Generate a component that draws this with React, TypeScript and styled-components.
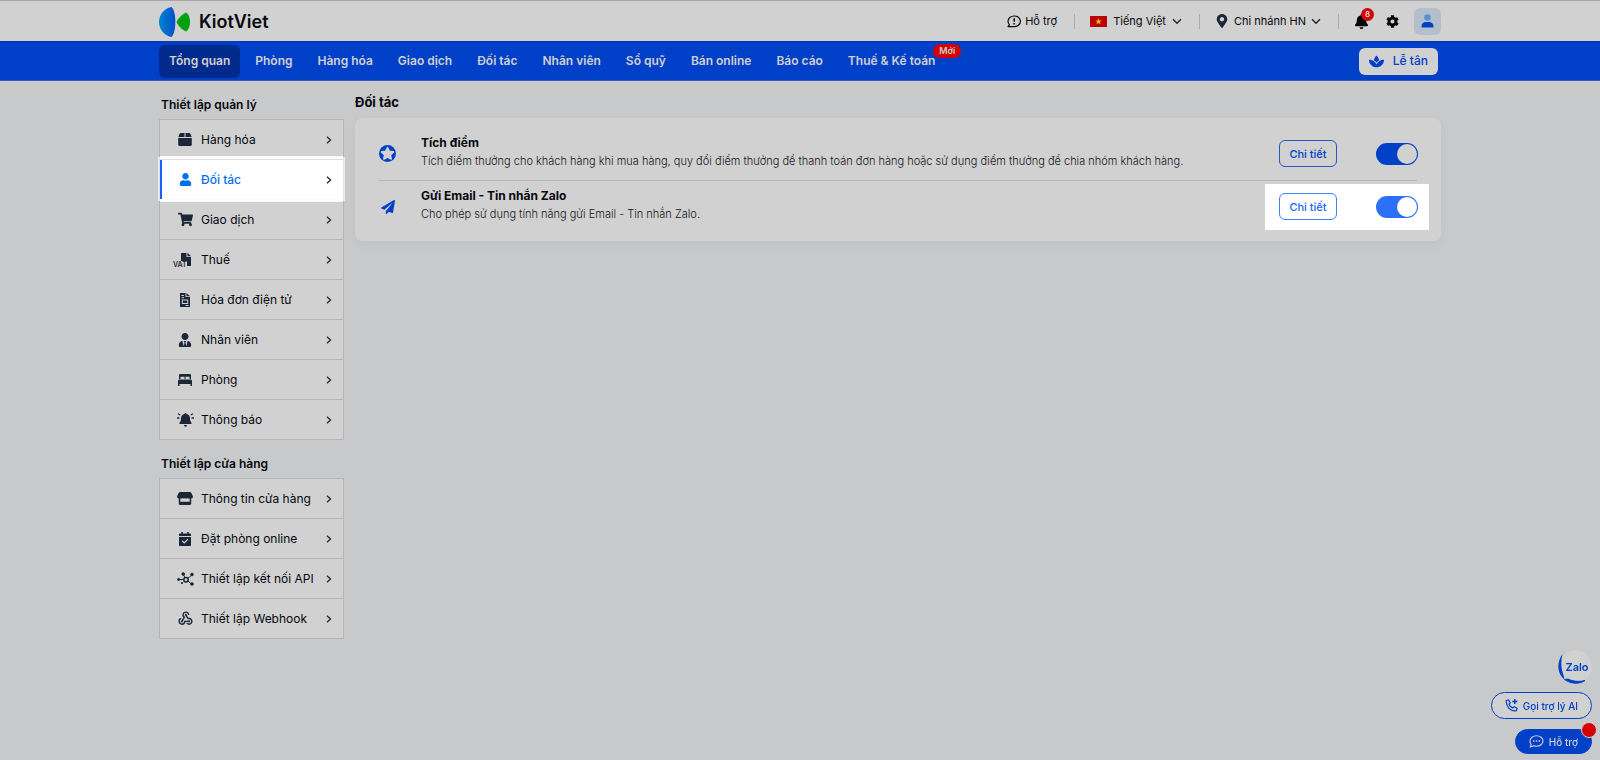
import React, { useState } from "react";
import styled, { createGlobalStyle } from "styled-components";
import { FaBell, FaCog, FaMapMarkerAlt, FaPaperPlane, FaShoppingCart, FaSpa, FaUser, FaUserTie } from "react-icons/fa";
import { MdWebhook } from "react-icons/md";

const color = {
  page: "#c8c9cb",
  surface: "#d1d1d1",
  line: "#b4b5b8",
  ink: "#05070c",
  icon: "#1b2636",
  brand: "#0040c8",
  brandDark: "#002b8c",
  bright: "#0070f4",
  red: "#d40000",
};

const GlobalStyle = createGlobalStyle`
  *, *::before, *::after { box-sizing: border-box; }
  body {
    margin: 0;
    min-height: 100vh;
    background: ${color.page};
    color: ${color.ink};
    font-family: Inter, "Noto Sans", sans-serif;
    font-size: 12px;
    line-height: 16px;
  }
  button, input, select { font: inherit; color: inherit; }
  button { cursor: pointer; }
  a { color: inherit; text-decoration: none; }
  h1, h2, h3, p, ul { margin: 0; padding: 0; }
  ul { list-style: none; }
  svg { display: block; flex: none; }
`;

const Container = styled.div`
  max-width: 1282px;
  margin: 0 auto;
  display: flex;
`;

const Header = styled.header`
  background: ${color.surface};
  border-top: 1px solid #a6a6a6;
  ${Container} { height: 40px; align-items: center; justify-content: space-between; }
`;

const Logo = styled.a`
  display: flex;
  align-items: center;
  gap: 8px;
  padding-top: 2px;
  font-size: 18px;
  line-height: 24px;
  font-weight: 600;
`;

const Tools = styled.div`
  display: flex;
  align-items: center;
  font-size: 11px;
`;

const PlainButton = styled.button<{ $gap?: number }>`
  display: flex;
  align-items: center;
  gap: ${(p) => p.$gap ?? 4}px;
  padding: 0;
  border: 0;
  background: none;
`;

const Divider = styled.span`
  width: 1px;
  height: 15px;
  margin: 0 15px 0 17px;
  background: #aaabad;
`;

const BellButton = styled(PlainButton)`
  position: relative;
  margin-right: 17px;
`;

const Count = styled.span`
  position: absolute;
  top: -6px;
  right: -5px;
  width: 13px;
  height: 13px;
  border-radius: 50%;
  background: ${color.red};
  color: #dcdcdc;
  font-size: 8px;
  line-height: 13px;
  font-weight: 600;
`;

const Avatar = styled.button`
  display: grid;
  place-items: center;
  width: 27px;
  height: 27px;
  margin-left: 15px;
  padding: 0;
  border: 0;
  border-radius: 6px;
  background: #b3bfcc;
`;

const NavBar = styled.nav`
  background: ${color.brand};
  border-top: 1px solid #0036b4;
  border-bottom: 1px solid #3c58b4;
  ${Container} { height: 38px; align-items: center; justify-content: space-between; }
`;

const NavList = styled.ul`
  display: flex;
  gap: 5px;
`;

const NavLink = styled.a<{ $active?: boolean }>`
  position: relative;
  display: flex;
  align-items: center;
  height: 33px;
  padding: 0 10px;
  border-radius: 6px;
  background: ${(p) => (p.$active ? color.brandDark : "transparent")};
  color: #d1d1d1;
  font-weight: 600;
`;

const NewTag = styled.span`
  position: absolute;
  top: -1px;
  right: -16px;
  padding: 0 6px;
  border-radius: 7px;
  background: ${color.red};
  font-size: 9px;
  line-height: 14px;
`;

const Reception = styled.button`
  display: flex;
  align-items: center;
  gap: 9px;
  height: 27px;
  margin-right: 3px;
  padding: 0 10px;
  border: 0;
  border-radius: 6px;
  background: ${color.surface};
  color: ${color.brand};
  font-weight: 500;
`;

const Page = styled(Container)`
  align-items: flex-start;
  gap: 11px;
  padding-top: 12px;
`;

const Sidebar = styled.aside`
  flex: 0 0 185px;
  display: flex;
  flex-direction: column;
  gap: 12px;
`;

const GroupTitle = styled.h2`
  padding: 4px 2px 6px;
  font-size: 12px;
  line-height: 16px;
  font-weight: 600;
`;

const Menu = styled.ul`
  border: 1px solid ${color.line};
`;

const MenuItem = styled.li<{ $active?: boolean }>`
  position: relative;
  z-index: ${(p) => (p.$active ? 1 : 0)};
  background: ${(p) => (p.$active ? "#ffffff" : color.surface)};
  box-shadow: ${(p) => (p.$active ? "0 3px #ffffffd8, 0 -3px #ffffffd8, 0 0 0 2px #ffffffa0" : "none")};
  &:not(:first-child) { border-top: 1px solid ${(p) => (p.$active ? "#dcdee0" : color.line)}; }
`;

const MenuLink = styled.a<{ $active?: boolean }>`
  display: grid;
  grid-template-columns: 24px 1fr 6px;
  align-items: center;
  gap: 4px;
  height: 39px;
  padding: 0 11px 0 11px;
  border-left: 2px solid ${(p) => (p.$active ? "#1a5fff" : "transparent")};
  color: ${(p) => (p.$active ? color.bright : color.ink)};
  font-weight: ${(p) => (p.$active ? 500 : 400)};
  white-space: nowrap;
`;

const MenuIcon = styled.span<{ $active?: boolean }>`
  display: grid;
  place-items: center;
  color: ${(p) => (p.$active ? color.bright : color.icon)};
`;

const Main = styled.main`
  flex: 1;
  min-width: 0;
`;

const Title = styled.h1`
  padding-bottom: 7px;
  font-size: 13px;
  line-height: 18px;
  font-weight: 700;
`;

const Card = styled.section`
  padding: 9px 24px 8px;
  border-radius: 8px;
  background: ${color.surface};
  box-shadow: 0 4px 12px #0000000a;
`;

const Setting = styled.div`
  display: flex;
  align-items: center;
  height: 53px;
  &:not(:first-child) { box-shadow: inset 0 1px ${color.line}; }
`;

const SettingIcon = styled.span`
  display: grid;
  place-items: center;
  flex: 0 0 17px;
  margin-right: 25px;
  color: ${color.brand};
`;

const SettingText = styled.div`
  flex: 1;
  min-width: 0;
  padding-bottom: 4px;
  h3 { font-size: 12px; line-height: 18px; font-weight: 700; }
  p { font-size: 11px; line-height: 18px; font-weight: 300; color: #14171d; }
`;

const Actions = styled.div<{ $lit?: boolean }>`
  display: flex;
  align-items: center;
  gap: 39px;
  height: 46px;
  margin-right: -12px;
  padding: 0 11px 0 14px;
  background: ${(p) => (p.$lit ? "#ffffff" : "transparent")};
`;

const Detail = styled.button<{ $lit?: boolean }>`
  width: 58px;
  height: 27px;
  padding: 0;
  border: 1px solid ${(p) => (p.$lit ? "#3b82fb" : "#2458c4")};
  border-radius: 6px;
  background: none;
  color: ${(p) => (p.$lit ? "#1a66f0" : color.brand)};
  font-size: 11px;
  font-weight: 500;
`;

const Switch = styled.input<{ $lit?: boolean }>`
  appearance: none;
  display: flex;
  align-items: center;
  width: 42px;
  height: 22px;
  margin: 0;
  padding: 0 1px;
  border-radius: 11px;
  background: #8d9096;
  cursor: pointer;
  &::before {
    content: "";
    width: 20px;
    height: 20px;
    border-radius: 50%;
    background: ${(p) => (p.$lit ? "#ffffff" : color.surface)};
  }
  &:checked {
    justify-content: flex-end;
    background: ${(p) => (p.$lit ? "#2d70f8" : color.brand)};
  }
`;

const Floating = styled.div`
  position: fixed;
  right: 8px;
  bottom: 6px;
  display: flex;
  flex-direction: column;
  align-items: flex-end;
`;

const Zalo = styled.button`
  position: relative;
  display: grid;
  place-items: center;
  width: 34px;
  height: 34px;
  margin-bottom: 8px;
  padding: 0 0 0 4px;
  border: 0;
  background: none;
  color: ${color.brand};
  font-size: 11px;
  font-weight: 600;
  svg { position: absolute; inset: 0; }
  span { position: relative; }
`;

const Pill = styled.button<{ $solid?: boolean }>`
  position: relative;
  display: flex;
  align-items: center;
  gap: 5px;
  height: ${(p) => (p.$solid ? 25 : 27)}px;
  margin-bottom: ${(p) => (p.$solid ? 0 : 10)}px;
  padding: 0 13px;
  border: 1px solid ${color.brand};
  border-radius: 14px;
  background: ${(p) => (p.$solid ? color.brand : color.surface)};
  color: ${(p) => (p.$solid ? "#d1d1d1" : color.brand)};
  font-size: 10px;
  font-weight: 500;
`;

const Dot = styled.i`
  position: absolute;
  top: -8px;
  right: -6px;
  width: 16px;
  height: 16px;
  border: 1px solid #d1d1d1;
  border-radius: 50%;
  background: ${color.red};
`;

const Svg = ({ w = 16, h = w, box, children }: { w?: number; h?: number; box: string; children: React.ReactNode }) => (
  <svg width={w} height={h} viewBox={box} fill="currentColor" aria-hidden="true">{children}</svg>
);

const Arrow = () => (
  <svg width="6" height="8" viewBox="0 0 6 8" fill="none" stroke="#22262c" strokeWidth="1.300" aria-hidden="true">
    <path d="M1 .7L4.600 4 1 7.300" />
  </svg>
);

const Caret = () => (
  <svg width="10" height="7" viewBox="0 0 10 7" fill="none" stroke="#22262c" strokeWidth="1.400" aria-hidden="true">
    <path d="M1 1.300l4 4 4-4" />
  </svg>
);

const LogoMark = () => (
  <svg width="32" height="32" viewBox="0 0 32 32" aria-hidden="true">
    <defs>
      <linearGradient id="mark" x1="0" y1="0" x2="1" y2="0">
        <stop offset="0" stopColor="#0086d2" />
        <stop offset="1" stopColor="#004fcb" />
      </linearGradient>
    </defs>
    <path d="M12.5 1C4.500 2.800 0 9 0 16s4.500 13.200 12.500 15c2.800-3 3.800-8.500 3.800-15S15.300 4 12.500 1z" fill="url(#mark)" />
    <path d="M27.200 6.500c-4 1.800-7.400 5-9.400 8.800-.2.500-.2.900 0 1.400 2 3.800 5.400 7 9.400 8.800 2.600-2 3.800-5.500 3.800-9.500s-1.200-7.500-3.800-9.500z" fill="#00a011" />
  </svg>
);

const HelpBubble = () => (
  <svg width="14" height="13" viewBox="0 0 14 13" fill="none" stroke="currentColor" strokeWidth="1.200" aria-hidden="true">
    <path d="M1 11.600h6.200c3.500 0 6.200-2.400 6.200-5.300S10.700 1 7.200 1 1 3.400 1 6.300c0 1.300.5 2.500 1.500 3.400z" strokeLinejoin="round" />
    <path d="M7.200 3.300v3.500M7.200 8v1.400" strokeWidth="1.500" />
  </svg>
);

const Flag = () => (
  <svg width="17" height="11" viewBox="0 0 17 11" aria-hidden="true">
    <path fill="#bd0008" d="M0 0h17v11H0z" />
    <path fill="#dccb00" d="M8.500 2.200l.8 2.400h2.500l-2 1.500.8 2.400-2.100-1.500-2.100 1.500.8-2.400-2-1.500h2.500z" />
  </svg>
);

const Person = () => (
  <svg width="13" height="14" viewBox="0 0 13 14" aria-hidden="true">
    <circle cx="6.500" cy="3.500" r="3.300" fill="#5a8fd4" />
    <path d="M.5 12.500c0-3 1.800-4.500 4.500-4.500h3c2.700 0 4.500 1.500 4.500 4.500 0 .7-.4 1-1 1h-10c-.6 0-1-.3-1-1z" fill="#0043c4" />
  </svg>
);

const BoxIcon = () => (
  <Svg w={14} h={13} box="0 0 14 13">
    <path d="M2.800 0h3.700v4H.3l1.300-3.300C1.800.2 2.200 0 2.800 0zM7.500 0h3.700c.6 0 1 .2 1.200.7L13.700 4H7.500zM.2 5h13.600v6.800c0 .7-.5 1.200-1.200 1.200H1.400c-.7 0-1.200-.5-1.200-1.200z" />
  </Svg>
);

const VatIcon = () => (
  <svg width="24" height="16" viewBox="0 0 24 16" fill="currentColor" aria-hidden="true">
    <path d="M8 1h5.500v4H18v9h-4V9H8z" />
    <path d="M14.500.8L18 4.200h-3.500z" />
    <text x="0" y="15" fontSize="7" fontWeight="600">VAT</text>
  </svg>
);

const InvoiceIcon = () => (
  <Svg w={12} h={14} box="0 0 12 14">
    <path fillRule="evenodd" d="M1 0h5.500v4H11v10H1zM2.500 2v1H5V2zM2.500 4.200v1H5v-1zM2.800 6.500V11h6.400V6.500zM3.800 7.500h4.400V10H3.800zM6.500 12v1h3v-1z" />
    <path d="M7.500 0L11 3.200H7.500z" />
  </Svg>
);

const BedIcon = () => (
  <Svg w={14} h={12} box="0 0 14 12">
    <path fillRule="evenodd" d="M1 5V1.200C1 .5 1.500 0 2.200 0h9.600c.7 0 1.200.5 1.200 1.200V5h-1.500V2.800h-4V5h-1V2.800h-4V5zM1.500 5.500h11c.8 0 1.500.7 1.500 1.500v5h-1.500v-2h-11v2H0V7c0-.8.7-1.500 1.500-1.500z" />
  </Svg>
);

const AlarmIcon = () => (
  <Svg w={17} h={14} box="0 0 17 14">
    <path d="M8.500 0c.6 0 1 .4 1 1 2.200.4 3.500 2.200 3.500 4.200 0 2.500.6 3.500 1.500 4.600.4.500.1 1.200-.6 1.200H3.100c-.7 0-1-.7-.6-1.200C3.400 8.700 4 7.700 4 5.200 4 3.200 5.300 1.400 7.500 1c0-.6.4-1 1-1zM7 12h3c0 1-.6 1.700-1.500 1.700S7 13 7 12z" />
    <path d="M1 .8l2.200 1.200M0 5h2.400M16 .8L13.800 2M17 5h-2.400" stroke="currentColor" strokeWidth="1.300" />
  </Svg>
);

const StoreIcon = () => (
  <Svg w={16} h={13} box="0 0 16 13">
    <path fillRule="evenodd" d="M3 0h10c.5 0 .9.200 1.100.6L15.800 4c.5 1.300-.3 2.500-1.600 2.500v5.300c0 .7-.5 1.200-1.200 1.200H3c-.7 0-1.200-.5-1.200-1.200V6.500C.5 6.500-.3 5.300.2 4L1.900.6C2.100.2 2.500 0 3 0zm.3 6.300v3.500h9.400V6.300c-.6.400-1.800.4-2.400-.3-.6.700-1.700.7-2.300 0-.6.700-1.700.7-2.300 0-.6.700-1.800.7-2.400.3z" />
  </Svg>
);

const CalendarIcon = () => (
  <Svg w={12} h={14} box="0 0 12 14">
    <path fillRule="evenodd" d="M2.300 0h1.500v1.500h4.400V0h1.500v1.500H11c.6 0 1 .4 1 1V4H0V2.500c0-.6.400-1 1-1h1.300zM0 5h12v8c0 .6-.4 1-1 1H1c-.6 0-1-.4-1-1zm8.500 1.700L5.300 10 3.600 8.400l-.9.900 2.600 2.500L9.400 7.600z" />
  </Svg>
);

const ApiIcon = () => (
  <svg width="17" height="14" viewBox="0 0 17 14" fill="currentColor" stroke="currentColor" aria-hidden="true">
    <path d="M1.500 7.500H6M6.500 2.500L8 6M10.500 6.500L15 3M10.500 8.500l4 3.500" fill="none" />
    <circle cx="9" cy="7.700" r="2.200" fill="none" strokeWidth="1.500" />
    <circle cx="1.600" cy="7.500" r="1.100" />
    <circle cx="6.200" cy="2" r="1.300" />
    <circle cx="15" cy="2.500" r="1.300" />
    <circle cx="5" cy="11" r=".7" />
    <circle cx="15" cy="12" r="1.300" />
  </svg>
);

const StarBadge = () => (
  <Svg w={17} box="0 0 17 17">
    <circle cx="8.500" cy="8.500" r="8.500" />
    <path fill="#d1d1d1" stroke="#d1d1d1" strokeWidth="1.800" strokeLinejoin="round" d="M8.500 2.800l1.700 3.700 4.100.5-3 2.800.8 4.100-3.600-2-3.600 2 .8-4.100-3-2.800 4.100-.5z" />
  </Svg>
);

const ZaloMark = () => (
  <svg width="34" height="34" viewBox="0 0 34 34" aria-hidden="true">
    <circle cx="17.500" cy="16.500" r="16.300" fill={color.surface} />
    <path d="M4.500 4C-1 12-1 21 4 27l2.500 2.500L5.800 26C3 19 2.500 12 4.500 4z" fill={color.brand} />
    <path d="M6.500 29.500c6 4.500 15 5 20.500 1C21 32 15 31.500 10 29z" fill={color.brand} stroke={color.brand} />
  </svg>
);

const CallIcon = () => (
  <svg width="13" height="13" viewBox="0 0 13 13" fill="none" stroke="currentColor" strokeWidth="1.200" strokeLinejoin="round" aria-hidden="true">
    <path d="M1.300 1.500L3.500.8l1.700 3-1.300 1.400c.7 1.600 2 2.900 3.800 3.700l1.500-1.200 2.900 1.600-.7 2.400C6 13 .5 7.500 1.300 1.500z" />
    <path d="M9.800 0v5M7.300 2.500h5" strokeWidth="1.500" />
  </svg>
);

const ChatIcon = () => (
  <svg width="15" height="13" viewBox="0 0 15 13" fill="none" stroke="currentColor" strokeWidth="1.100" aria-hidden="true">
    <path d="M1.200 12l1-2.500A4.500 4.500 0 0 1 1 6c0-3 3-5.200 6.500-5.200S14 3 14 6s-3 5.200-6.500 5.200c-1 0-2-.2-2.800-.5z" strokeLinejoin="round" />
    <path d="M4 6h1.400M6.800 6h1.400M9.600 6H11" strokeWidth="1.500" />
  </svg>
);

type Entry = { label: string; icon: React.ReactNode; active?: boolean };

const management: Entry[] = [
  { label: "Hàng hóa", icon: <BoxIcon /> },
  { label: "Đối tác", icon: <FaUser size={13} />, active: true },
  { label: "Giao dịch", icon: <FaShoppingCart size={15} /> },
  { label: "Thuế", icon: <VatIcon /> },
  { label: "Hóa đơn điện tử", icon: <InvoiceIcon /> },
  { label: "Nhân viên", icon: <FaUserTie size={14} /> },
  { label: "Phòng", icon: <BedIcon /> },
  { label: "Thông báo", icon: <AlarmIcon /> },
];

const store: Entry[] = [
  { label: "Thông tin cửa hàng", icon: <StoreIcon /> },
  { label: "Đặt phòng online", icon: <CalendarIcon /> },
  { label: "Thiết lập kết nối API", icon: <ApiIcon /> },
  { label: "Thiết lập Webhook", icon: <MdWebhook size={17} /> },
];

const navigation = ["Tổng quan", "Phòng", "Hàng hóa", "Giao dịch", "Đối tác", "Nhân viên", "Sổ quỹ", "Bán online", "Báo cáo", "Thuế & Kế toán"];

const MenuGroup = ({ title, items }: { title: string; items: Entry[] }) => (
  <section>
    <GroupTitle>{title}</GroupTitle>
    <Menu>
      {items.map((item) => (
        <MenuItem key={item.label} $active={item.active}>
          <MenuLink href="#" $active={item.active}>
            <MenuIcon $active={item.active}>{item.icon}</MenuIcon>
            {item.label}
            <Arrow />
          </MenuLink>
        </MenuItem>
      ))}
    </Menu>
  </section>
);

type SettingProps = { icon: React.ReactNode; title: string; text: string; lit?: boolean };

const SettingRow = ({ icon, title, text, lit }: SettingProps) => {
  const [on, setOn] = useState(true);
  return (
    <Setting>
      <SettingIcon>{icon}</SettingIcon>
      <SettingText>
        <h3>{title}</h3>
        <p>{text}</p>
      </SettingText>
      <Actions $lit={lit}>
        <Detail $lit={lit}>Chi tiết</Detail>
        <Switch type="checkbox" role="switch" aria-label={title} checked={on} onChange={() => setOn(!on)} $lit={lit} />
      </Actions>
    </Setting>
  );
};

export default function App() {
  return (
    <>
      <GlobalStyle />
      <Header>
        <Container>
          <Logo href="#"><LogoMark />KiotViet</Logo>
          <Tools>
            <PlainButton><HelpBubble />Hỗ trợ</PlainButton>
            <Divider />
            <PlainButton $gap={6}><Flag />Tiếng Việt<Caret /></PlainButton>
            <Divider />
            <PlainButton $gap={5}><FaMapMarkerAlt size={14} color={color.icon} />Chi nhánh HN<Caret /></PlainButton>
            <Divider />
            <BellButton aria-label="Thông báo"><FaBell size={15} /><Count>8</Count></BellButton>
            <PlainButton aria-label="Thiết lập"><FaCog size={13} /></PlainButton>
            <Avatar aria-label="Tài khoản"><Person /></Avatar>
          </Tools>
        </Container>
      </Header>
      <NavBar>
        <Container>
          <NavList>
            {navigation.map((label, i) => (
              <li key={label}>
                <NavLink href="#" $active={i === 0}>
                  {label}
                  {i === navigation.length - 1 && <NewTag>Mới</NewTag>}
                </NavLink>
              </li>
            ))}
          </NavList>
          <Reception><FaSpa size={15} />Lễ tân</Reception>
        </Container>
      </NavBar>
      <Page>
        <Sidebar>
          <MenuGroup title="Thiết lập quản lý" items={management} />
          <MenuGroup title="Thiết lập cửa hàng" items={store} />
        </Sidebar>
        <Main>
          <Title>Đối tác</Title>
          <Card>
            <SettingRow
              icon={<StarBadge />}
              title="Tích điểm"
              text="Tích điểm thưởng cho khách hàng khi mua hàng, quy đổi điểm thưởng để thanh toán đơn hàng hoặc sử dụng điểm thưởng để chia nhóm khách hàng."
            />
            <SettingRow
              icon={<FaPaperPlane size={14} />}
              title="Gửi Email - Tin nhắn Zalo"
              text="Cho phép sử dụng tính năng gửi Email - Tin nhắn Zalo."
              lit
            />
          </Card>
        </Main>
      </Page>
      <Floating>
        <Zalo><ZaloMark /><span>Zalo</span></Zalo>
        <Pill><CallIcon />Gọi trợ lý AI</Pill>
        <Pill $solid><ChatIcon />Hỗ trợ<Dot /></Pill>
      </Floating>
    </>
  );
}
